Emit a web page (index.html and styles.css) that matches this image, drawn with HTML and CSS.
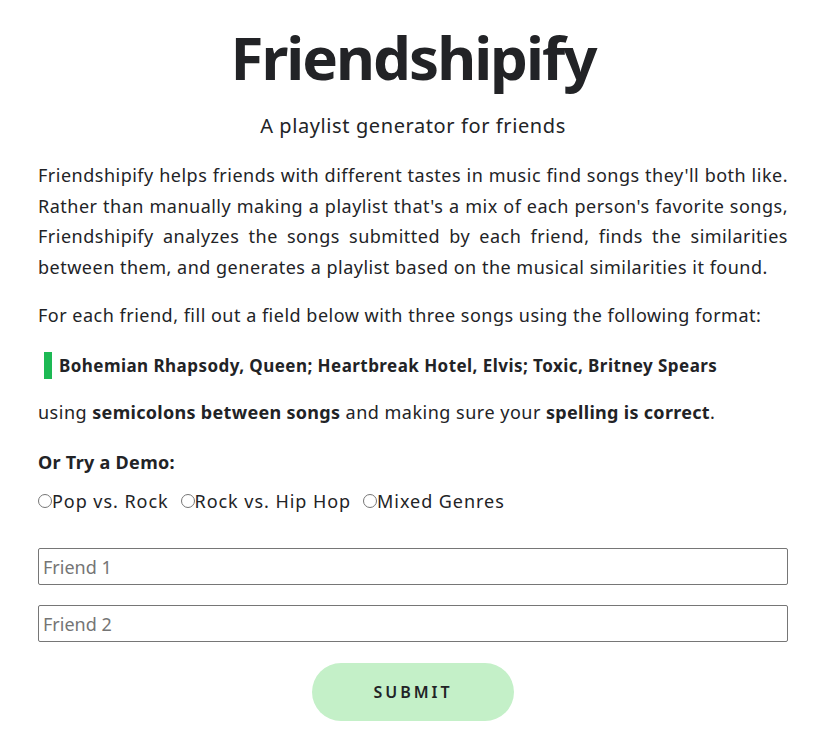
FILE: index.html
```html
<!DOCTYPE html>
<html lang="en">
<head>
<meta charset="utf-8">
<title>Friendshipify</title>
<link rel="stylesheet" href="styles.css">
</head>
<body>
<main class="page">
  <h1 class="title">Friendshipify</h1>
  <p class="subtitle">A playlist generator for friends</p>
  <p class="intro">Friendshipify helps friends with different tastes in music find songs they'll both like. Rather than manually making a playlist that's a mix of each person's favorite songs, Friendshipify analyzes the songs submitted by each friend, finds the similarities between them, and generates a playlist based on the musical similarities it found.</p>
  <p class="text">For each friend, fill out a field below with three songs using the following format:</p>
  <blockquote class="example">Bohemian Rhapsody, Queen; Heartbreak Hotel, Elvis; Toxic, Britney Spears</blockquote>
  <p class="text">using <strong>semicolons between songs</strong> and making sure your <strong>spelling is correct</strong>.</p>
  <h2 class="demo-title">Or Try a Demo:</h2>
  <div class="demos">
    <label class="demo"><input type="radio" name="demo">Pop vs. Rock</label>
    <label class="demo"><input type="radio" name="demo">Rock vs. Hip Hop</label>
    <label class="demo"><input type="radio" name="demo">Mixed Genres</label>
  </div>
  <form class="form">
    <input class="field" type="text" placeholder="Friend 1">
    <input class="field" type="text" placeholder="Friend 2">
    <button class="submit" type="button">SUBMIT</button>
  </form>
</main>
</body>
</html>
```

FILE: styles.css
```css
* { box-sizing: border-box; }
body {
  margin: 0;
  background: #fff;
  color: #222326;
  font-family: "Noto Sans", sans-serif;
}
.page {
  width: 750px;
  margin-left: 38px;
  padding-top: 14px;
}
.title {
  margin: 0;
  text-align: center;
  font-size: 60px;
  line-height: 86px;
  font-weight: 700;
  letter-spacing: -2px;
}
.subtitle {
  margin: 12px 0 0;
  text-align: center;
  font-size: 20px;
  line-height: 28px;
  letter-spacing: 0.6px;
}
.intro {
  margin: 20px 0 0;
  text-align: justify;
  font-size: 18px;
  line-height: 30.5px;
  letter-spacing: 0.5px;
}
.text {
  margin: 18px 0 0;
  font-size: 18px;
  line-height: 30px;
  letter-spacing: 0.5px;
}
.text strong { font-weight: 700; letter-spacing: 0.3px; }
.example {
  margin: 22px 0 0 6px;
  padding-left: 7px;
  border-left: 8px solid #1db954;
  font-size: 17px;
  font-weight: 700;
  line-height: 27px;
  letter-spacing: 0.45px;
}
.demo-title {
  margin: 20px 0 0;
  font-size: 18px;
  line-height: 30px;
  font-weight: 700;
  letter-spacing: 0.3px;
}
.demos {
  display: flex;
  gap: 12px;
  margin-top: 11px;
  font-size: 18px;
  line-height: 26px;
  letter-spacing: 0.95px;
}
.demo {
  display: flex;
  align-items: center;
}
.demo input {
  margin: 0;
  width: 14px;
  height: 14px;
}
.form {
  display: flex;
  flex-direction: column;
  align-items: center;
  margin-top: 34px;
}
.field {
  width: 100%;
  height: 37px;
  margin: 0 0 20px;
  padding: 0 4px;
  border: 1px solid #767676;
  border-radius: 2px;
  font-family: inherit;
  font-size: 18px;
  color: #222326;
}
.field::placeholder { color: #757575; }
.field:nth-of-type(2) { margin-bottom: 21px; }
.submit {
  width: 202px;
  height: 58px;
  border: none;
  border-radius: 29px;
  background: #c4f0c8;
  color: #222326;
  font-family: inherit;
  font-size: 16px;
  font-weight: 600;
  letter-spacing: 3px;
}
```
